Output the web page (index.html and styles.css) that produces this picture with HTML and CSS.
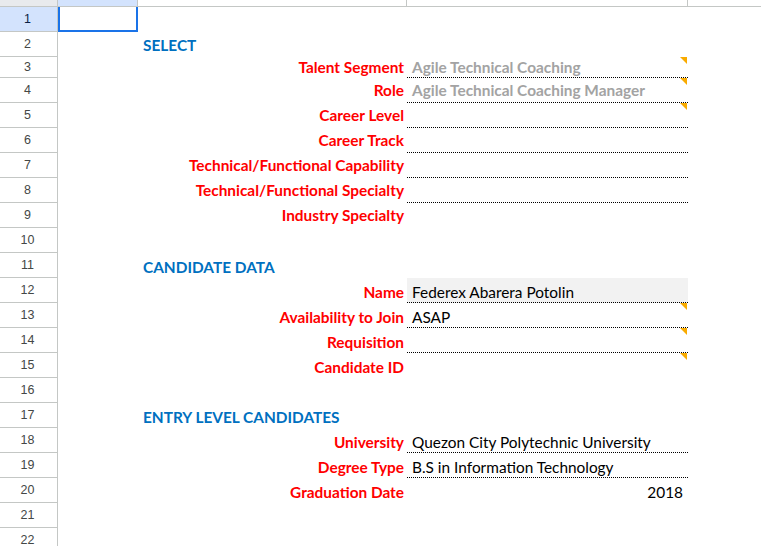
FILE: index.html
```html
<!DOCTYPE html>
<html>
<head>
<meta charset="utf-8">
<link rel="stylesheet" href="styles.css">
</head>
<body>
<div class="sheet">
  <div class="colhead">
    <div class="corner"></div>
    <div class="ch ch-sel"></div>
    <div class="ch"></div>
    <div class="ch"></div>
    <div class="ch ch-last"></div>
  </div>

  <div class="row"><div class="rh rh-sel">1</div><div class="cell active"></div><div class="cell"></div><div class="cell"></div><div class="cell"></div></div>
  <div class="row"><div class="rh">2</div><div class="cell"></div><div class="cell head">SELECT</div><div class="cell"></div><div class="cell"></div></div>
  <div class="row short"><div class="rh">3</div><div class="cell"></div><div class="cell label">Talent Segment</div><div class="cell val dot muted">Agile Technical Coaching<span class="flag"></span></div><div class="cell"></div></div>
  <div class="row"><div class="rh">4</div><div class="cell"></div><div class="cell label">Role</div><div class="cell val dot muted">Agile Technical Coaching Manager<span class="flag"></span></div><div class="cell"></div></div>
  <div class="row"><div class="rh">5</div><div class="cell"></div><div class="cell label">Career Level</div><div class="cell val dot"><span class="flag"></span></div><div class="cell"></div></div>
  <div class="row"><div class="rh">6</div><div class="cell"></div><div class="cell label">Career Track</div><div class="cell val dot"></div><div class="cell"></div></div>
  <div class="row"><div class="rh">7</div><div class="cell"></div><div class="cell label">Technical/Functional Capability</div><div class="cell val dot"></div><div class="cell"></div></div>
  <div class="row"><div class="rh">8</div><div class="cell"></div><div class="cell label">Technical/Functional Specialty</div><div class="cell val dot"></div><div class="cell"></div></div>
  <div class="row"><div class="rh">9</div><div class="cell"></div><div class="cell label">Industry Specialty</div><div class="cell val"></div><div class="cell"></div></div>
  <div class="row"><div class="rh">10</div><div class="cell"></div><div class="cell"></div><div class="cell"></div><div class="cell"></div></div>
  <div class="row lo"><div class="rh">11</div><div class="cell"></div><div class="cell head">CANDIDATE DATA</div><div class="cell"></div><div class="cell"></div></div>
  <div class="row lo"><div class="rh">12</div><div class="cell"></div><div class="cell label">Name</div><div class="cell val dot filled">Federex Abarera Potolin</div><div class="cell"></div></div>
  <div class="row lo"><div class="rh">13</div><div class="cell"></div><div class="cell label">Availability to Join</div><div class="cell val dot">ASAP<span class="flag"></span></div><div class="cell"></div></div>
  <div class="row lo"><div class="rh">14</div><div class="cell"></div><div class="cell label">Requisition</div><div class="cell val dot"><span class="flag"></span></div><div class="cell"></div></div>
  <div class="row lo"><div class="rh">15</div><div class="cell"></div><div class="cell label">Candidate ID</div><div class="cell val"><span class="flag"></span></div><div class="cell"></div></div>
  <div class="row lo"><div class="rh">16</div><div class="cell"></div><div class="cell"></div><div class="cell"></div><div class="cell"></div></div>
  <div class="row lo"><div class="rh">17</div><div class="cell"></div><div class="cell head">ENTRY LEVEL CANDIDATES</div><div class="cell"></div><div class="cell"></div></div>
  <div class="row lo"><div class="rh">18</div><div class="cell"></div><div class="cell label">University</div><div class="cell val dot">Quezon City Polytechnic University</div><div class="cell"></div></div>
  <div class="row lo"><div class="rh">19</div><div class="cell"></div><div class="cell label">Degree Type</div><div class="cell val dot">B.S in Information Technology</div><div class="cell"></div></div>
  <div class="row lo"><div class="rh">20</div><div class="cell"></div><div class="cell label">Graduation Date</div><div class="cell val num">2018</div><div class="cell"></div></div>
  <div class="row"><div class="rh">21</div><div class="cell"></div><div class="cell"></div><div class="cell"></div><div class="cell"></div></div>
  <div class="row"><div class="rh">22</div><div class="cell"></div><div class="cell"></div><div class="cell"></div><div class="cell"></div></div>
</div>
</body>
</html>
```

FILE: styles.css
```css
* { box-sizing: border-box; }
html, body { margin: 0; padding: 0; background: #fff; overflow: hidden; }
body { width: 761px; height: 546px; }

.sheet {
  display: flex;
  flex-direction: column;
  font-family: Lato, "Liberation Sans", sans-serif;
}

.colhead, .row {
  display: grid;
  grid-template-columns: 58px 80px 269px 281px 1fr;
}

.colhead { height: 7px; border-bottom: 1px solid #c4c7c5; }
.corner { background: #e8eaed; border-right: 1px solid #c4c7c5; }
.ch { border-right: 1px solid #c4c7c5; background: #fff; }
.ch-sel { background: #d3e3fd; }
.ch-last { border-right: none; }

.row { height: 25px; }
.row.short { height: 21px; }

.rh {
  display: flex;
  align-items: center;
  justify-content: center;
  border-right: 1px solid #c4c7c5;
  border-bottom: 1px solid #c4c7c5;
  font-family: "Liberation Sans", Arial, sans-serif;
  font-size: 12.5px;
  color: #444746;
  padding-right: 2px;
}
.rh-sel { background: #d3e3fd; color: #0b1f45; }

.cell {
  position: relative;
  display: flex;
  align-items: center;
  font-size: 15.4px;
  white-space: nowrap;
  padding-bottom: 1px;
}
.row.lo .cell { padding-top: 3px; padding-bottom: 0; }
.cell.active { box-shadow: inset 2px 0 0 #1a73e8, inset -2px 0 0 #1a73e8, inset 0 -2px 0 #1a73e8; }

.head {
  padding-left: 5px;
  font-weight: bold;
  color: #0070c0;
}
.row .cell.head { padding-top: 1px; padding-bottom: 0; }
.row.lo .cell.head { padding-top: 2px; padding-bottom: 0; }
.label {
  justify-content: flex-end;
  padding-right: 3px;
  font-weight: bold;
  color: #ff0000;
}
.val { padding-left: 5px; color: #000; }
.val.muted { color: #a3a3a3; font-weight: bold; }
.val.dot { border-bottom: 1px dotted #000; }
.val.filled { background: #f2f2f2; }
.val.num { justify-content: flex-end; padding-right: 5px; }

.flag {
  position: absolute;
  top: 0;
  right: 1px;
  width: 0;
  height: 0;
  border-top: 7px solid #f9ab00;
  border-left: 7px solid transparent;
}
```
